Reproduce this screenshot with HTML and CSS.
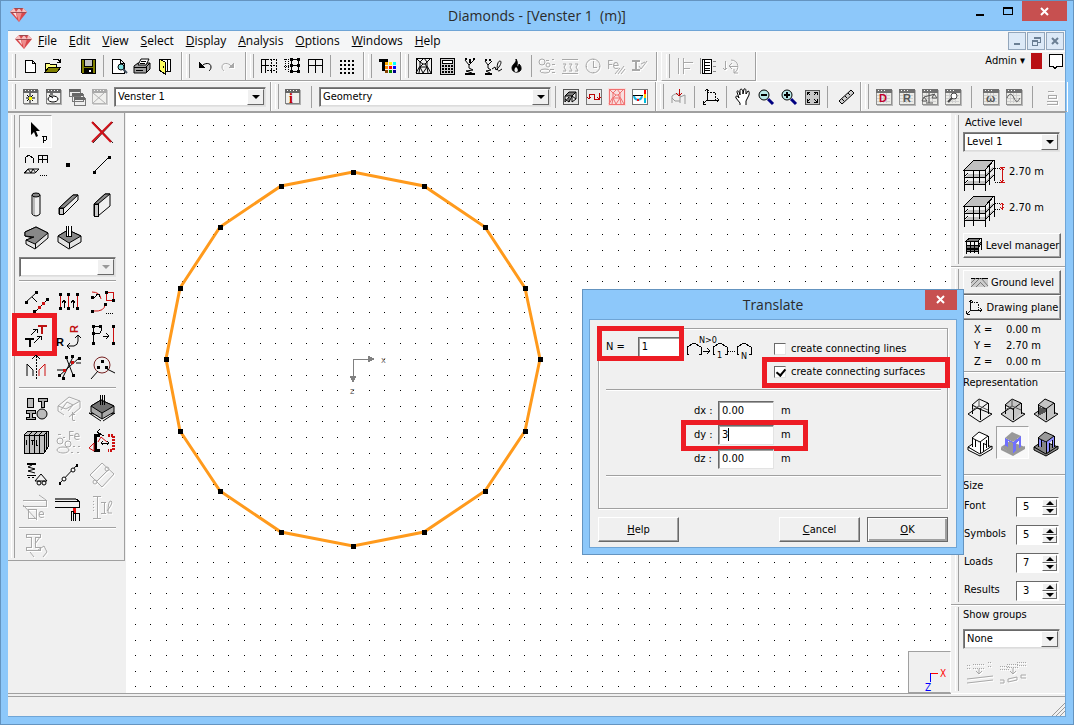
FILE: index.html
```html
<!DOCTYPE html>
<html lang="en">
<head>
<meta charset="utf-8">
<title>Diamonds - [Venster 1 (m)]</title>
<link rel="stylesheet" href="styles.css">
</head>
<body>
<svg class="defs" aria-hidden="true">
  <symbol id="gem" viewBox="0 0 17 15"><path d="M4 1h9l4 4-8 10-9-10z" fill="#d9484c"/><path d="M4 1l2 4h-6zM9 1l3 4h-6zM13 1l4 4h-5z" fill="#f6c0c0"/><path d="M6 5h6l-3 10z" fill="#ef8c8c"/><path d="M3 6l4 5-1-5z" fill="#fbe0e0"/><path d="M1 5.500h15M4.500 1.500h8" stroke="#9c4a50" fill="none"/></symbol>
  <symbol id="win" viewBox="0 0 18 18"><path d="M2 2h15v15h-15z" fill="#b0b0b0" stroke="none"/><path d="M1 1h14v14h-14z" fill="#f0f0ee" stroke="#808080"/><path d="M1 1h14v3h-14z" fill="#666" stroke="#666"/><path d="M3 2.500h1M6 2.500h1M9 2.500h1M12 2.500h1" stroke="#fff"/></symbol>
  <symbol id="gwin" viewBox="0 0 18 18"><path d="M2 2h16v16h-16z" fill="#b8b8b8" stroke="none"/><path d="M1 1h15v15h-15z" fill="#ecece8" stroke="#909090"/><path d="M1 1h15v3h-15z" fill="#707070" stroke="#707070"/><path d="M3 2.500h1M6 2.500h1M9 2.500h1" stroke="#fff"/><path d="M2 7h13M2 10h13M2 13h13M5 5v10M8 5v10M11 5v10" stroke="#cfcfcf"/></symbol>
  <symbol id="mesh" viewBox="0 0 18 18"><path d="M1 1h15v15h-15z"/><path class="smooth" d="M1 1l4 4v4l-4 7M16 1l-4 4v4l4 7M5 5l3 2h2l2-2M8 7l-3 3-1 6M10 7l2 3 1 6M5 10h7M5 10l3 6 4-6M5 5l4-4 3 4"/></symbol>
  <symbol id="storey" viewBox="0 0 32 34"><path d="M1 12l10-10h20l-9 10zM2 19l3-3h17l8-8v4l-8 8zM2 26l3-3h17l8-8v4l-8 7z" fill="#c0c0c0" stroke="none"/><path d="M1 12l10-10h20l-9 10zM1 12v21M10 12v20M22 12v21M31 2v21M26 7v20M1 19h21M1 26h21M16 12v13"/><path class="smooth" d="M22 19l9-9M22 26l9-9M1 19l4-4M1 26l4-4"/></symbol>
  <symbol id="plane" viewBox="0 0 18 18"><path d="M5 1v11h12M5 12l-4 4M3 3l2-2 2 2M15 10l2 2-2 2M1 13v3h3"/><path d="M5 4h8v8" stroke-dasharray="2 1"/></symbol>
</svg>

<div class="window">
  <header class="titlebar">
    <svg class="gem" width="17" height="15"><use href="#gem"/></svg>
    <h1>Diamonds - [Venster 1&nbsp; (m)]</h1>
    <div class="captions">
      <button class="cap" aria-label="Minimize"><svg width="10" height="10"><path d="M1 9h8" stroke-width="2"/></svg></button>
      <button class="cap" aria-label="Maximize"><svg width="12" height="10"><path d="M1 1h9v7h-9zM1 2h9"/></svg></button>
      <button class="cap close" aria-label="Close"><svg width="10" height="10"><path class="smooth" d="M1 2l7 7M8 2l-7 7" stroke="#fff" stroke-width="2"/></svg></button>
    </div>
  </header>

  <div class="client">
    <nav class="menu">
      <svg class="gem" width="17" height="15"><use href="#gem"/></svg>
      <a href="#file"><u>F</u>ile</a><a href="#edit"><u>E</u>dit</a><a href="#view"><u>V</u>iew</a><a href="#select"><u>S</u>elect</a><a href="#display"><u>D</u>isplay</a><a href="#analysis"><u>A</u>nalysis</a><a href="#options"><u>O</u>ptions</a><a href="#windows"><u>W</u>indows</a><a href="#help"><u>H</u>elp</a>
      <div class="mdi">
        <button aria-label="Minimize view"><svg width="10" height="10"><path d="M2 8h6" stroke="#6b7f94" stroke-width="2"/></svg></button>
        <button aria-label="Restore view"><svg width="10" height="10"><path d="M3 3v-2h6v5h-2M3 2h6M1 4h5v5h-5zM1 5h5" stroke="#6b7f94"/></svg></button>
        <button aria-label="Close view"><svg width="10" height="10"><path class="smooth" d="M2 2l6 6M8 2l-6 6" stroke="#6b7f94" stroke-width="2"/></svg></button>
      </div>
    </nav>

    <div class="toolbar">
      <div class="group first">
        <button aria-label="New"><svg width="20" height="20"><path d="M5 4h7l3 3v9h-10zM12 4v3h3" fill="#fff"/></svg></button>
        <button aria-label="Open"><svg width="20" height="20"><path d="M2 16v-9h4l1 1h6v3" fill="#ffff80"/><path d="M2 16l4-5h12l-4 5z" fill="#808000"/><path d="M10 4l2-1h3l2 3M14 6h3v-3"/></svg></button>
        <i class="space"></i>
        <button aria-label="Save"><svg width="20" height="20"><path d="M3 3h14v14h-13l-1-1z" fill="#808000"/><path d="M6 3h8v7h-8z" fill="#c0c0c0"/><path d="M6 12h8v5h-8z" fill="#000"/><path d="M12 14v2" stroke="#fff" stroke-width="2"/></svg></button>
        <i class="sep"></i>
        <button aria-label="Print preview"><svg width="20" height="20"><path d="M3 3h8l4 4v10h-12zM11 3v4h4" fill="#fff"/><circle class="smooth" cx="12" cy="11" r="3" fill="#80e0e0"/><path class="smooth" d="M14 13l4 4" stroke="#405060" stroke-width="2"/></svg></button>
        <button aria-label="Print"><svg width="20" height="20"><path class="smooth" d="M2 10l4-3h12v6l-4 4h-12z" fill="#a0a0a0"/><path class="smooth" d="M6 9l3-6h8l-3 6z" fill="#fff"/><path d="M9 5h5M8 7h5M2 11h12v5M4 14h7"/><path class="smooth" d="M14 11l4-4"/></svg></button>
        <button aria-label="Exit"><svg width="20" height="20"><path d="M4 3h11v12h-5" fill="#fff"/><path d="M4 3l6 3v12l-6-4z" fill="#ffff60"/><path d="M12 4v11M8 10v2"/></svg></button>
      </div>
      <div class="group">
        <button aria-label="Undo"><svg width="20" height="20"><path class="smooth" d="M7 10c2-3 9-4 9 1 0 2-1 3-2 4"/><path d="M4 6v6h6z" fill="#000" stroke="none"/></svg></button>
        <button aria-label="Redo" disabled><svg width="20" height="20"><path class="smooth" d="M13 10c-2-3-9-4-9 1 0 2 1 3 2 4"/><path d="M16 6v6h-6z" fill="#a8a8a8" stroke="none"/></svg></button>
      </div>
      <div class="group">
        <button aria-label="Grid lines"><svg width="20" height="20"><path d="M2 17v-14h6M2 9h6M6 3v14"/><path d="M8 3h9v11h-9M12 3v14M17 3v14M8 9h9" stroke-dasharray="2 1"/></svg></button>
        <button aria-label="Move grid"><svg width="20" height="20"><path d="M2 3h7M2 10h7M3 3v12M6 3v14" stroke-dasharray="1 1"/><path d="M9 3v14M16 3v14M9 3h7M9 9h7M9 15h7"/><path d="M8 3h3M15 3h3M8 9h3M15 9h3M8 15h3M15 15h3" stroke-width="3"/></svg></button>
        <button aria-label="Grid"><svg width="20" height="20"><path d="M3 17v-14h14v14M3 9h14M10 3v14"/></svg></button>
        <i class="sep"></i>
        <button aria-label="Dots"><svg width="20" height="20"><path d="M4 5h14M4 9h14M4 13h14M4 17h14" stroke-width="2" stroke-dasharray="2 2"/></svg></button>
      </div>
      <div class="group tight">
        <button aria-label="Text colours"><svg width="20" height="20"><path d="M2 4h9M6 3v12" stroke-width="3"/><path d="M8 7h3" stroke="#fa0" stroke-width="3"/><path d="M12 7h3" stroke="#ff0" stroke-width="3"/><path d="M16 7h3" stroke="#0ff" stroke-width="3"/><path d="M8 11h3" stroke="#f80" stroke-width="3"/><path d="M12 11h3" stroke="#f00" stroke-width="3"/><path d="M16 11h3" stroke="#00f" stroke-width="3"/><path d="M8 15h3" stroke="#840" stroke-width="3"/><path d="M12 15h3" stroke="#080" stroke-width="3"/><path d="M16 15h3" stroke="#008" stroke-width="3"/></svg></button>
      </div>
      <div class="group">
        <button aria-label="Mesh"><svg width="18" height="18"><use href="#mesh"/></svg></button>
        <button aria-label="Calculate"><svg width="20" height="20"><path d="M3 2h14v16h-14z" fill="#d0d0d0"/><path d="M5 4h10v3h-10z" fill="#fff"/><path d="M5 10h11M5 13h11M5 16h11" stroke-width="2" stroke-dasharray="2 1"/></svg></button>
        <button aria-label="Supports"><svg width="20" height="20"><path class="smooth" d="M5 4l4 5 5-5M9 9v3l4 2-7 1 6 2"/><path d="M5 3h2M9 4h2M13 3h2M9 6h2M5 18h10" stroke-width="2"/></svg></button>
        <button aria-label="Springs"><svg width="20" height="20"><path class="smooth" d="M2 5l3 4 4-4M5 9v3l3 2-5 1 4 2M9 13l3-2 1 3M13 14c5-4 6-9 4-9-3 0-4 10-1 10l3-2"/><path d="M2 4h2M6 4h2M2 18h7" stroke-width="2"/></svg></button>
        <button aria-label="Fire"><svg width="20" height="20"><path class="smooth" d="M10 3c1 4-4 5-4 9 0 6 10 5 9 0 0-2-1-3-2-4 0 2-1 2-2 3 0-3 1-5-1-8z" fill="#000"/><path class="smooth" d="M10 11c-3 3-1 5 0 5s3-1 1-4z" fill="#f0f0f0" stroke="none"/></svg></button>
        <i class="sep"></i>
        <button aria-label="Reinforcement" disabled><svg width="20" height="20"><circle class="smooth" cx="5" cy="6" r="3"/><circle class="smooth" cx="11" cy="9" r="2"/><ellipse class="smooth" cx="8" cy="15" rx="5" ry="2"/><path d="M9 4h3M15 3h2M13 13h4M15 8h3M15 16h3"/></svg></button>
        <button aria-label="Sections" disabled><svg width="20" height="20"><path d="M2 3h16M2 17h16"/><path class="smooth" d="M3 8h3l-2 3 2 4h-3M9 8h3l-2 3 2 4h-3M15 8h3l-2 3 2 4h-3"/></svg></button>
        <button aria-label="Time" disabled><svg width="20" height="20"><circle class="smooth" cx="10" cy="10" r="7"/><path d="M10 5v6h4M10 3v1M10 16v1M3 10h1M16 10h1"/></svg></button>
        <button aria-label="Steel reinforcement" disabled><svg width="20" height="20"><text x="1" y="13" class="t12">Fe</text><path class="smooth" d="M9 18l5-6M12 18l6-8M15 18l4-5"/></svg></button>
        <button aria-label="Profile" disabled><svg width="20" height="20"><path d="M3 5h8M7 5v9M3 14h8" stroke-width="2"/><path class="smooth" d="M10 10l2 3 6-8M12 8l4-2"/></svg></button>
      </div>
      <div class="group apart">
        <button aria-label="Align" disabled><svg width="20" height="20"><path d="M3 2v16M8 2v16M8 6h10M8 12h7"/></svg></button>
        <button aria-label="Beam table"><svg width="20" height="20"><path d="M2 2v16M15 5h3M15 10h3M15 15h3" stroke="#888"/><path d="M4 3h9v14h-9z" fill="#fff"/><path d="M6 3v14M6 6h6M6 9h6M6 12h6M6 14h6"/></svg></button>
        <button aria-label="Rotate down" disabled><svg width="20" height="20"><path d="M4 5v9M2 12l2 2 2-2M8 10h9M11 7l-3 3 3 3"/><path class="smooth" d="M10 4c8 0 9 10 3 13M13 13v4h4"/></svg></button>
      </div>
      <div class="account">
        <button class="user">Admin ▾</button><span class="flag"></span>
        <button aria-label="Messages"><svg width="15" height="18"><path d="M1 1h13v12h-5l-2 3-2-3h-4z" fill="#fff"/></svg></button>
      </div>
    </div>

    <div class="toolbar second">
      <div class="group">
        <button aria-label="New window"><svg width="18" height="18"><use href="#win"/><path class="smooth" d="M8 5v10M4 10h9M5 7l6 6M11 7l-6 6"/><path d="M7 10h3" stroke="#ff0" stroke-width="3"/></svg></button>
        <button aria-label="Duplicate"><svg width="18" height="18"><use href="#win"/><ellipse class="smooth" cx="8" cy="11" rx="5" ry="3" fill="#fff"/><path class="smooth" d="M4 7l4 3M5 6h3"/></svg></button>
        <button aria-label="Cascade"><svg width="18" height="18"><path d="M1 1h11v7h-11zM4 6h11v7h-11zM6 10h11v7h-11z" fill="#eee" stroke="#777"/><path d="M1 2h11M4 6h11M6 10h11" stroke="#666" stroke-width="3"/></svg></button>
        <button aria-label="Close window" disabled><svg width="18" height="18" class="dim"><use href="#win"/><path class="smooth" d="M2 5l12 10M13 5l-11 10" stroke="#777"/></svg></button>
        <span class="combo c1"><select aria-label="Window"><option>Venster 1</option></select><i></i></span>
      </div>
      <div class="group g2">
        <button aria-label="Info"><svg width="18" height="18"><use href="#win"/><text x="5" y="15" class="info">i</text></svg></button>
        <i class="sep wide"></i>
        <span class="combo c2"><select aria-label="Mode"><option>Geometry</option></select><i></i></span>
        <i class="sep"></i>
        <button aria-label="Geometry"><svg width="18" height="18"><path d="M1 1h15v15h-15z" fill="#e4e4e4" stroke="#555"/><path class="smooth" d="M3 8l4-4h7l-4 4zM3 8v6M7 9v5M10 8v6M14 4v7" fill="#777"/><path class="smooth" d="M3 11l4 3 3-6 4 3M3 14l4-5M10 14l4-3"/></svg></button>
        <button aria-label="Loads"><svg width="18" height="18"><path d="M1 1h15v15h-15z" fill="#ececec" stroke="#777"/><path d="M4 11v-5h5v5h5v-6M2 9l2 2 2-2M12 9l2 2 2-2" stroke="#b00"/></svg></button>
        <button aria-label="Mesh mode"><svg width="18" height="18" class="rosy"><use href="#mesh"/></svg></button>
        <button aria-label="Results"><svg width="18" height="18"><path d="M1 1h15v15h-15z" fill="#fff" stroke="#777"/><path d="M2 7h10"/><path class="smooth" d="M3 8c1 5 7 5 8 0" stroke="#18b0e0" stroke-width="2"/><path d="M6 12h2" stroke="red" stroke-width="2"/><path d="M14 2v4" stroke="red" stroke-width="2"/><path d="M14 6v4" stroke="#fc0" stroke-width="2"/><path d="M14 10v5" stroke="#0bd" stroke-width="2"/></svg></button>
      </div>
      <div class="group zoomers">
        <button aria-label="Cut"><svg width="18" height="18"><path class="smooth" d="M2 15v-7l3-2h5v9M10 9l5-2v9M2 10l3 3h5" stroke="#999"/><path d="M9 1v7M6 5l3 3 3-3" stroke="#c00000"/></svg></button>
        <i class="sep"></i>
        <button aria-label="Drawing plane"><svg width="18" height="18"><use href="#plane"/></svg></button>
        <i class="sep"></i>
        <button aria-label="Pan"><svg width="20" height="20"><path class="smooth" d="M7 18v-2l-4-5c-1-2 1-3 3 0l-2-6c0-2 2-2 3 3l0-5c1-2 3-1 3 4l1-5c2-1 2 1 2 5l2-3c2 0 1 3 1 4l-3 6v4" fill="#fff"/></svg></button>
        <button aria-label="Zoom out"><svg width="20" height="20"><path class="smooth" d="M12 12l5 5" stroke="#000080" stroke-width="3"/><circle class="smooth" cx="8" cy="8" r="5" fill="#b8e8e8"/><path d="M5 8h6" stroke-width="2"/></svg></button>
        <button aria-label="Zoom in"><svg width="20" height="20"><path class="smooth" d="M12 12l5 5" stroke="#000080" stroke-width="3"/><circle class="smooth" cx="8" cy="8" r="5" fill="#b8e8e8"/><path d="M5 8h6M8 5v6" stroke-width="2"/></svg></button>
        <button aria-label="Zoom all"><svg width="18" height="18"><path d="M2 2h14v14h-14z" fill="#c8c8c8" stroke="#555"/><path d="M4 7v-3h3M11 4h3v3M4 11v3h3M11 14h3v-3M4 4l3 3M14 4l-3 3M4 14l3-3M14 14l-3-3"/></svg></button>
        <i class="sep"></i>
        <button class="measure" aria-label="Measure"><svg width="20" height="20"><path class="smooth" d="M2 14l12-11 3 3-12 11z" fill="#ccc"/><path class="smooth" d="M5 12l2 2M8 9l2 2M11 6l2 2"/></svg></button>
      </div>
      <div class="group last">
        <button aria-label="Design"><svg width="18" height="18"><use href="#gwin"/><text x="4" y="14" class="letter crimson">D</text></svg></button>
        <button aria-label="Report"><svg width="18" height="18"><use href="#gwin"/><text x="5" y="14" class="letter">R</text></svg></button>
        <button aria-label="Balance"><svg width="18" height="18"><use href="#gwin"/><path class="smooth" d="M8 5v10M5 15h7M3 9l11-3M3 9l-2 4h5zM13 6l-2 4h5z" stroke="#555"/></svg></button>
        <button aria-label="Inspect"><svg width="18" height="18"><use href="#gwin"/><circle class="smooth" cx="10" cy="8" r="3" fill="#fff" stroke="#444"/><path class="smooth" d="M8 10l-4 4" stroke="#444" stroke-width="2"/></svg></button>
        <i class="sep wide"></i>
        <button aria-label="Frequency"><svg width="18" height="18"><use href="#gwin"/><text x="4" y="14" class="letter">ω</text></svg></button>
        <button aria-label="Signal"><svg width="18" height="18"><use href="#gwin"/><path class="smooth" d="M2 10c2-5 5-5 7 0s4 4 6 0" stroke="#555"/></svg></button>
        <i class="sep wide"></i>
        <button aria-label="Stack" disabled><svg width="18" height="18"><path d="M5 3h6M5 7h8v3h-8zM4 13h10v3h-10"/></svg></button>
      </div>
    </div>

    <main class="work">
      <aside class="palette">
        <div class="tools">
          <button class="on" aria-label="Select"><svg width="28" height="28"><path class="smooth" d="M9 4v13l3-3 2 5 2-1-2-5h4z" fill="#000" stroke="none"/><path d="M21 25v-7M20 18h4l1 2-1 2h-3"/></svg></button>
          <i></i>
          <button aria-label="Delete"><svg width="28" height="28"><path class="smooth" d="M5 4l20 21M25 4l-20 21" stroke="#222"/><path class="smooth" d="M4 4l19 20M24 4l-20 20" stroke="#d01018" stroke-width="2"/></svg></button>
          <button aria-label="Structures"><svg width="28" height="28"><path d="M3 12v-5l4-3 4 3v5M16 12v-8h9v8M16 8h9M20 4v8"/><path class="smooth" d="M2 22l4-4h11l-4 4zM6 18l3 4 2-4 3 4M3 22l3-4"/><path d="M18 24h8" stroke-dasharray="1 1"/></svg></button>
          <button aria-label="Point"><svg width="28" height="28"><path d="M11 14h4" stroke-width="4"/></svg></button>
          <button aria-label="Line"><svg width="28" height="28"><path d="M6 21l15-15"/><path d="M5 21h3M20 6h3" stroke-width="3"/></svg></button>
        </div>
        <div class="tools">
          <button aria-label="Column"><svg width="28" height="28"><path class="smooth" d="M10 4v19q4 4 8 0v-19" fill="#f0f0f0"/><path d="M11 6h2v18h-2z" fill="#bbb" stroke="none"/><ellipse class="smooth" cx="14" cy="4" rx="4" ry="2" fill="#888"/></svg></button>
          <button aria-label="Beam"><svg width="28" height="28"><path class="smooth" d="M4 17l14-13h5v5l-14 14h-5z" fill="#f0f0f0"/><path class="smooth" d="M4 17l14-13h5l-14 13z" fill="#888"/><path d="M4 17h4v6h-4z" fill="#ccc"/></svg></button>
          <button aria-label="Wall"><svg width="28" height="28"><path class="smooth" d="M6 13l11-10h5v12l-12 10h-4z" fill="#f0f0f0"/><path class="smooth" d="M6 13l11-10h5l-12 10z" fill="#888"/><path d="M6 13h4v12h-4z" fill="#ccc"/></svg></button>
          <button aria-label="Slab"><svg width="28" height="28"><path class="smooth" d="M3 8l11-5 12 6v5l-13 11-9-5v-4l7-2-8-2z" fill="#e4e4e4"/><path class="smooth" d="M3 8l11-5 12 6-13 11-9-4 8-3-9-1z" fill="#888"/><path d="M13 20v4"/></svg></button>
          <button aria-label="Foundation"><svg width="28" height="28"><path class="smooth" d="M3 12l10-6 13 6v6l-12 7-11-7z" fill="#e4e4e4"/><path class="smooth" d="M3 12l10-6 13 6-12 7z" fill="#888"/><path d="M11 2v10h5v-10" fill="#fff"/><path d="M14 19v5M13 2v10"/></svg></button>
        </div>
        <span class="combo c3"><select aria-label="Section" disabled><option></option></select><i></i></span>
        <hr>
        <div class="tools">
          <button aria-label="Divide line"><svg width="28" height="28"><path class="smooth" d="M4 14l10-9M10 9l5 5M14 23l12-12"/><path d="M3 14h3M13 4h3M11 23h3M24 11h3" stroke-width="3"/><path d="M16 19h3M20 15h3" stroke="#c11" stroke-width="3"/></svg></button>
          <button aria-label="Extend lines"><svg width="28" height="28"><path d="M5 6v14M13 6v14M22 6v14" stroke="#c11"/><path d="M9 20v-7M7 15l2-3 2 3M18 20v-7M16 15l2-3 2 3"/><path d="M4 6h3M12 6h3M21 6h3M4 20h3M12 20h3M21 20h3" stroke-width="3"/></svg></button>
          <button aria-label="Arcs"><svg width="28" height="28"><path class="smooth" d="M4 4q8 0 9 7M5 23q12 1 12-7" stroke="#c11"/><path d="M18 4h7v8h-7z" stroke="#c11"/><path d="M17 4h3M24 12h3M3 9h3M3 23h3M16 16h3" stroke-width="3"/><path d="M5 11l5-5M8 6h3v3"/><path d="M18 25h8" stroke-dasharray="1 1"/></svg></button>
          <button aria-label="Translate"><svg width="28" height="28"><path d="M3 18h9M8 18v8" stroke-width="2"/><path d="M16 5h9M20 5v8" stroke="#b11" stroke-width="2"/><path d="M9 14l6-6M11 8h4v4M12 22l6-6M15 15h4v4"/></svg><span class="mark tool"></span></button>
          <button aria-label="Rotate"><svg width="28" height="28"><text x="1" y="25" class="letter black">R</text><text x="0" y="0" class="letter red" transform="translate(23 12) rotate(-90)">R</text><path class="smooth" d="M23 14v6q0 4-4 5h-7M20 17l3-3 3 3M15 22l-3 3 3 3"/></svg></button>
          <button aria-label="Project"><svg width="28" height="28"><path d="M5 22v-17h7l2 3-2 4h-7M15 15h6M18 12l3 3-3 3"/><path d="M25 5v17" stroke="#c11"/><path d="M4 5h3M11 5h3M4 12h3M4 22h3M24 5h3M24 22h3" stroke-width="3"/></svg></button>
          <button aria-label="Mirror"><svg width="28" height="28"><path class="smooth" d="M5 22v-12l6 6v6"/><path class="smooth" d="M23 22v-12l-6 6v6" stroke="#c11"/><path d="M14 2v24" stroke-dasharray="2 1"/><path d="M10 5l4-4 4 4"/></svg></button>
          <button aria-label="Intersect"><svg width="28" height="28"><path class="smooth" d="M4 22l20-18M8 23l10-20M11 3l7 18M2 16h6M21 9h5"/><path d="M3 21h3M7 24h3M16 2h3M23 4h3M10 3h3M17 21h3" stroke-width="3"/><path d="M8 16h3M16 8h3" stroke="#c11" stroke-width="3"/></svg></button>
          <button aria-label="Clean up"><svg width="28" height="28"><circle class="smooth" cx="14" cy="11" r="8" stroke="#722"/><path class="smooth" d="M3 25l7-8M19 15l8 4"/><path d="M13 7h3M9 13h3M17 13h3" stroke-width="3"/></svg></button>
        </div>
        <hr>
        <div class="tools">
          <button aria-label="Sections"><svg width="28" height="28"><path d="M5 3h6v9h-6z" fill="#bbb"/><path d="M16 3h9v3h-3v6h-3v-6h-3zM4 15h9v3h-3v4h3v2h-9v-2h3v-4h-3z" fill="#aaa"/><circle class="smooth" cx="20" cy="19" r="5" fill="#bbb"/></svg></button>
          <button aria-label="Thickness" disabled><svg width="28" height="28"><path class="smooth" d="M3 11l11-9 11 4v7l-11 9M3 11v5l6 4M3 11l8 3 14-8M6 15l6-8 6 3-5 6"/><text x="16" y="26" class="t12">t</text></svg></button>
          <button aria-label="Foundation size"><svg width="28" height="28"><path class="smooth" d="M3 11l10-6 13 6v6l-12 7-11-7z" fill="#aaa"/><path class="smooth" d="M3 11l10-6 13 6-12 7z" fill="#707070"/><path d="M12 0v10M14 0v10M16 0v10"/><path class="smooth" d="M1 18l12 8M15 26l12-8M1 18l5 1M27 18l-4 1M14 18v6"/></svg></button>
          <button aria-label="Library"><svg width="28" height="28"><path d="M2 7l4-4h20v16l-4 6h-20z" fill="#c0c0c0"/><path d="M2 7h20v18M7 7v18M12 7v18M17 7v18M7 7l4-4M12 7l4-4M17 7l4-4M22 7l4-4M4 12v5M10 12v5M9 12h3M14 12v5h2M24 5v17"/></svg></button>
          <button aria-label="Concrete" disabled><svg width="28" height="28"><text x="13" y="12" class="t12">Fe</text><circle class="smooth" cx="5" cy="13" r="3"/><circle class="smooth" cx="13" cy="16" r="3"/><ellipse class="smooth" cx="8" cy="22" rx="6" ry="3"/><path d="M3 6h3M8 9h2M18 18h2M23 18h2M16 24h2M22 24h2"/></svg></button>
          <button aria-label="Hinges"><svg width="28" height="28"><path d="M12 7h-5v15h5" stroke-width="3"/><path d="M20 7h5v15h-5" stroke="#c11" stroke-width="3" stroke-dasharray="2 1"/><path class="smooth" d="M10 14l3-5 6 5M6 15l-5 5 5 3z" stroke="#c11"/><path d="M9 4l7 4M12 1l-3 3 3 3M13 15h8M15 13l-2 2 2 2M19 13l2 2-2 2"/></svg></button>
          <button aria-label="Supports"><svg width="28" height="28"><path d="M5 3h9" stroke-width="2"/><path class="smooth" d="M10 4l-4 2 7 2-7 2 7 2M19 13l-6 7h12z"/><path d="M5 14h9M6 16h2M10 16h2"/><circle class="smooth" cx="17" cy="22" r="2"/><circle class="smooth" cx="22" cy="22" r="2"/></svg></button>
          <button aria-label="Joint"><svg width="28" height="28"><path class="smooth" d="M5 22l17-18"/><circle class="smooth" cx="9" cy="18" r="2" fill="#fff"/><circle class="smooth" cx="18" cy="9" r="2" fill="#fff"/><path d="M4 22h2M21 4h2" stroke-width="3"/></svg></button>
          <button aria-label="Line hinge" disabled><svg width="28" height="28"><path class="smooth" d="M2 14l12-12 12 11-12 13zM9 20l11-11"/><circle class="smooth" cx="7" cy="21" r="2"/><circle class="smooth" cx="19" cy="8" r="2"/></svg></button>
          <button aria-label="Eccentricity" disabled><svg width="28" height="28"><path d="M1 6h23v6h-23M6 15h8v9h-8z"/><path class="smooth" d="M17 1l7 5M1 11l14 15"/><text x="16" y="24" class="t12">e</text></svg></button>
          <button aria-label="Beam end"><svg width="28" height="28"><path d="M0 4h20l4 3v6h-24M0 7h24"/><path d="M0 5h21" stroke="#666" stroke-width="2"/><path d="M19 14v5" stroke="#e11" stroke-width="3"/><path d="M16 27v-10h2v10M19 19h5v8M20 19v8"/></svg></button>
          <button aria-label="Buckling" disabled><svg width="28" height="28"><path d="M9 2v22M5 2h8M5 24h8M13 8h5M13 19h5M16 8v11"/><path class="smooth" d="M19 17q7-9 4-10t-3 12h4"/><path d="M5 7v11" stroke-dasharray="1 2"/></svg></button>
        </div>
        <hr>
        <div class="tools short">
          <button aria-label="Steel" disabled><svg width="28" height="28"><path d="M4 3h14v3h-5v10h5v3h-14v-3h5v-10h-5z"/><path class="smooth" d="M13 13l5-7M8 21l4 5M16 19l6-4 3 6-4 5"/></svg></button>
        </div>
      </aside>

      <section class="canvas">
        <svg class="drawing"><path id="dots"/><path id="ring" class="ring"/><path id="nodes" class="nodes"/><g class="axes"><path d="M227 246h20M227 246v20"/><path d="M242 243l6 3-6 3zM224 263l3 6 3-6z" fill="#808080"/><text x="255" y="250">x</text><text x="224" y="281">z</text></g></svg>
        <div class="compass"><svg width="42" height="42"><path d="M21 21h8" stroke="red"/><path d="M21 21v9" stroke="blue"/><text x="31" y="25">X</text><text x="16" y="39">Z</text></svg></div>
      </section>

      <aside class="side">
        <section class="level">
          <label for="lvl">Active level</label>
          <span class="combo"><select id="lvl"><option>Level 1</option></select><i></i></span>
          <p><svg width="44" height="34"><use href="#storey" width="32" height="34"/><path d="M32 10h5M32 24h5" stroke-dasharray="1 1"/><path d="M39 10v14M37 12l2-2 2 2M37 22l2 2 2-2M37 9h5M37 24h5" stroke="#c11"/></svg>2.70 m</p>
          <p><svg width="44" height="34"><use href="#storey" width="32" height="34"/><path d="M32 9h5M32 15h5" stroke-dasharray="1 1"/><path d="M39 9v7M37 11l2-2 2 2M37 13l2 2 2-2" stroke="#c11"/></svg>2.70 m</p>
          <button class="push"><svg width="17" height="17"><path d="M1 4l4-3h11l-3 3zM1 8h12l3-3v2l-3 4h-12zM1 12h12v2h-12z" fill="#777"/><path d="M1 4v13M5 4v12M9 4v12M13 4v13M16 1v12"/></svg>Level manager</button>
        </section>
        <section class="plane">
          <button class="push"><svg width="17" height="11"><path d="M1 1h17v9h-17z" fill="#ccc" stroke="none"/><path d="M1 1h17"/><path class="smooth" d="M1 6l5-5M1 10l9-9M6 10l5-5M10 5l5 5M11 1l7 8" stroke="#777"/></svg>Ground level</button>
          <button class="push"><svg width="17" height="17"><use href="#plane"/></svg>Drawing plane</button>
          <dl><dt>X =</dt><dd>0.00 m</dd><dt>Y =</dt><dd>2.70 m</dd><dt>Z =</dt><dd>0.00 m</dd></dl>
        </section>
        <section class="repr">
          <h2>Representation</h2>
          <div class="views" id="views"></div>
        </section>
        <section class="size">
          <h2>Size</h2>
          <div class="row"><label for="s1">Font</label><span class="spin"><input id="s1" value="5"><span><button aria-label="Increase font"></button><button aria-label="Decrease font"></button></span></span></div>
          <div class="row"><label for="s2">Symbols</label><span class="spin"><input id="s2" value="5"><span><button aria-label="Increase symbols"></button><button aria-label="Decrease symbols"></button></span></span></div>
          <div class="row"><label for="s3">Loads</label><span class="spin"><input id="s3" value="7"><span><button aria-label="Increase loads"></button><button aria-label="Decrease loads"></button></span></span></div>
          <div class="row"><label for="s4">Results</label><span class="spin"><input id="s4" value="3"><span><button aria-label="Increase results"></button><button aria-label="Decrease results"></button></span></span></div>
        </section>
        <section class="groups">
          <label for="grp">Show groups</label>
          <span class="combo"><select id="grp"><option>None</option></select><i></i></span>
          <div class="pair">
            <button aria-label="Group" disabled><svg width="28" height="26"><path d="M1 5h3M1 8h3M7 4h12M7 8h12M22 2h4M22 6h4" stroke-dasharray="1 1"/><path class="smooth" d="M13 9v5M10 11l3 3 3-3M1 19l26-3M1 23l26-3"/></svg></button>
            <button aria-label="Ungroup" disabled><svg width="28" height="26"><path d="M1 6h9M8 4h11M18 2h9M1 9h9M8 7h11M18 5h9" stroke-dasharray="1 1"/><path class="smooth" d="M14 8v6M11 11l3 3 3-3M1 20h4v3h-4M9 22v-3l9-2v3zM27 15h-5v3h5"/></svg></button>
          </div>
        </section>
      </aside>
    </main>
    <footer class="status"><svg width="14" height="14"><path class="smooth" d="M1 14l13-13M5 14l9-9M9 14l5-5" stroke="#999"/></svg></footer>
  </div>
</div>

<div class="dialog" role="dialog" aria-labelledby="dt">
  <header><h2 id="dt">Translate</h2><button class="cap close" aria-label="Close dialog"><svg width="10" height="10"><path class="smooth" d="M1 1l7 7M8 1l-7 7" stroke="#fff" stroke-width="2"/></svg></button></header>
  <form>
    <div class="panel">
      <div class="top">
        <div class="count"><label for="n">N =</label><input id="n" value="1"><span class="mark"></span></div>
        <svg width="66" height="26"><path d="M2 17h-2v-7l7-4 7 4v7h-2M16 14h7M20 11l3 3-3 3M28 17h-2v-7l7-4 7 4v7h-2M52 17h-2v-7l7-4 7 4v7h-2"/><path d="M41 14h8" stroke-dasharray="1 1"/><text x="12" y="6">N&gt;0</text><text x="30" y="21">1</text><text x="54" y="22">N</text></svg>
        <div class="checks">
          <label><input type="checkbox">create connecting lines</label>
          <label><input type="checkbox" checked>create connecting surfaces<span class="mark"></span></label>
        </div>
      </div>
      <hr>
      <div class="deltas">
        <div><label for="dx">dx :</label><input id="dx" value="0.00"><span>m</span></div>
        <div><label for="dy">dy :</label><input id="dy" value="3"><span>m</span><b class="caret"></b><b class="mark"></b></div>
        <div><label for="dz">dz :</label><input id="dz" value="0.00"><span>m</span></div>
      </div>
      <hr>
    </div>
    <div class="actions"><button type="button" class="push"><span><u>H</u>elp</span></button><i></i><button type="button" class="push"><span><u>C</u>ancel</span></button><button type="button" class="push default"><span><u>O</u>K</span></button></div>
  </form>
</div>
<script src="drawing.js"></script>
</body>
</html>
```
FILE: styles.css
```css
* { box-sizing: border-box; }
html, body { height: 100%; }
body { margin: 0; position: relative; overflow: hidden; font: 11px/14px "DejaVu Sans Condensed", "Noto Sans", sans-serif; color: #000; }
button, input, select { font: inherit; color: inherit; margin: 0; }
button { border: 0; background: none; padding: 0; display: flex; align-items: center; justify-content: center; }
svg { display: block; fill: none; stroke: #000; shape-rendering: crispEdges; flex: none; overflow: visible; }
svg text { stroke: none; fill: #000; font-size: 9px; }
svg .t12 { font-size: 12px; }
svg .letter { font: bold 11px "Liberation Sans", sans-serif; fill: #555; }
svg .crimson { fill: #c0002b; }
svg .black { fill: #000; }
svg .red { fill: #c11111; }
svg .info { font: bold 14px "Liberation Serif", serif; fill: #c00000; }
.smooth { shape-rendering: auto; }
.defs { position: absolute; width: 0; height: 0; }
.gem { stroke: none; shape-rendering: auto; }
h1, h2, p, dl, dd { margin: 0; font-weight: normal; font-size: 11px; }
i { display: block; }

.window { height: 100%; display: flex; flex-direction: column; background: #8dc8fa; border: 1px solid #6494c0; padding: 0 7px 7px; }
.titlebar { height: 29px; flex: none; display: grid; grid-template-columns: 130px 1fr 130px; align-items: start; }
.titlebar .gem { margin: 6px 0 0 2px; }
.titlebar h1 { font: 14px/29px "Open Sans", sans-serif; color: #2b2b2b; text-align: center; }
.captions { display: flex; justify-content: flex-end; margin-right: -1px; }
.cap { width: 28px; height: 20px; }
.cap.close { width: 45px; background: #c75050; }
.client { flex: 1; min-height: 0; display: flex; flex-direction: column; background: #f0f0f0; border: 1px solid #6fa5d6; border-left: 0; }

.menu { height: 20px; flex: none; display: flex; align-items: center; background: #f5f6f7; gap: 12px; padding-left: 7px; font: 12px/18px "Open Sans", sans-serif; }
.menu a { color: #000; text-decoration: none; }
.menu .gem { margin-right: -6px; }
.mdi { margin-left: auto; display: flex; gap: 1px; padding-right: 1px; }
.mdi button { width: 18px; height: 18px; border: 1px solid #93a6bb; background: #dce9f7; }

.toolbar { display: flex; height: 30px; flex: none; border-top: 1px solid #fff; }
.group { display: flex; align-items: center; padding: 0 6px 0 11px; border-right: 1px solid #a0a0a0; border-bottom: 1px solid #a0a0a0; box-shadow: 1px 0 #fff; position: relative; }
.group::before, .palette::before, .side section::before { content: ""; position: absolute; left: 4px; top: 2px; bottom: 2px; width: 2px; border-left: 1px solid #fff; border-right: 1px solid #a0a0a0; }
.group button { width: 23px; height: 26px; }
.first { padding: 0 5px 0 10px; }
.tight { padding-right: 2px; }
.apart { margin-left: 4px; padding-right: 13px; border-left: 1px solid #fff; }
.space { width: 12px; }
.sep { width: 1px; height: 22px; background: #a0a0a0; margin: 0 3px 0 4px; }
.sep.wide { margin: 0 7px; }
.zoomers .sep { margin: 0 4px; }
button:disabled svg { stroke: #a8a8a8; filter: drop-shadow(1px 1px #fff); }
button:disabled svg text { fill: #a8a8a8; }
.dim { opacity: .5; }
.rosy { stroke: #f07070; background: #f8dede; }
.account { margin-left: auto; display: flex; align-items: flex-start; gap: 6px; padding: 1px 2px 0 0; }
.user { height: 16px; }
.flag { width: 11px; height: 16px; background: #b91014; }
.second { height: 31px; }
.second .group { padding-right: 4px; }
.second .g2 { padding-left: 10px; }
.second .zoomers { padding-right: 2px; }
.measure { margin: 0 0 0 3px; }
.second .last { flex: 1; border-right: 0; }

.combo { display: grid; height: 20px; background: #fff; border: 1px solid; border-color: #828282 #e3e3e3 #e3e3e3 #828282; box-shadow: inset 1px 1px #696969, inset -1px -1px #dcdcdc; }
.combo select { grid-area: 1 / 1; appearance: none; border: 0; background: none; padding: 0 18px 0 3px; width: 100%; min-width: 0; outline: 0; opacity: 1; }
.combo i { grid-area: 1 / 1; justify-self: end; width: 17px; margin: 1px; background: #f0f0f0; border: 1px solid; border-color: #fff #696969 #696969 #fff; pointer-events: none; display: flex; align-items: center; justify-content: center; }
.combo i::after { content: ""; border: 4px solid transparent; border-top-color: #000; border-bottom: 0; }
.c1 { width: 152px; margin-left: 3px; }
.c2 { width: 232px; }
.c3 { width: 97px; margin: 3px 0 0; }
.c3 i::after { border-top-color: #999; }

.work { flex: 1; min-height: 0; display: flex; border-top: 1px solid #a0a0a0; border-bottom: 1px solid #a0a0a0; }
.palette { width: 117px; flex: none; align-self: flex-start; position: relative; padding: 2px 8px 3px 11px; border-right: 1px solid #a0a0a0; border-bottom: 1px solid #a0a0a0; }
.palette::before { left: 3px; }
.tools { display: grid; grid-template-columns: repeat(3, 33px); grid-auto-rows: 33px; }
.tools + .tools { margin-top: 7px; }
.tools.short { grid-auto-rows: 25px; }
.tools button { position: relative; }
.tools .on, .views .on { background: #f8f8f8; border: 1px solid; border-color: #a0a0a0 #fff #fff #a0a0a0; }
.palette hr, .panel hr { width: 97px; height: 2px; border: 0; border-top: 1px solid #a0a0a0; background: #fff; margin: 3px 0; }
.mark { position: absolute; border: 5px solid #ed1c24; pointer-events: none; }
.mark.tool { inset: -5px -5px -5px -7px; }

.canvas { flex: 1; min-width: 0; background: #fff; position: relative; overflow: hidden; margin-left: 1px; }
.drawing { width: 100%; height: 100%; }
.ring { stroke: #ff9a1c; stroke-width: 3; shape-rendering: auto; }
.nodes { stroke-width: 5; }
.axes { stroke: #808080; }
.axes text { fill: #707070; }
.compass { position: absolute; right: 0; bottom: 0; width: 43px; height: 42px; background: #f0f0f0; border: 1px solid #a0a0a0; border-right-color: #fff; }
.compass text { font-size: 10px; }
.compass text:first-of-type { fill: red; }
.compass text:last-of-type { fill: blue; }

.side { width: 114px; flex: none; display: flex; flex-direction: column; }
.side section { position: relative; border-bottom: 1px solid #a0a0a0; padding: 0 4px 0 12px; box-shadow: 0 1px #fff; }
.side .combo { width: 97px; }
.level { height: 154px; }
.level label { display: block; padding: 3px 0 2px 2px; }
.level p { display: flex; align-items: center; gap: 2px; height: 33px; margin-top: 3px; }
.level p svg { margin-top: 6px; }
.push { background: #f0f0f0; border: 1px solid; border-color: #fff #696969 #696969 #fff; box-shadow: inset -1px -1px #a0a0a0; height: 25px; gap: 4px; white-space: nowrap; }
.side .push { width: 98px; }
.level .push { margin-top: 9px; }
.plane { height: 105px; }
.side .plane { padding-top: 3px; }
.plane dl { display: grid; grid-template-columns: 32px 1fr; row-gap: 2px; padding: 3px 0 0 11px; }
.repr { height: 103px; }
.repr h2 { padding: 4px 0 3px; }
.side .repr, .side .size { padding-right: 0; }
.views { display: grid; grid-template-columns: repeat(3, 33px); grid-auto-rows: 33px; }
.size { height: 130px; }
.size h2 { padding: 4px 0 0; height: 18px; }
.row { display: flex; justify-content: space-between; align-items: center; height: 28px; padding: 0 6px 0 1px; }
.row label { margin-top: -3px; }
.spin { display: flex; width: 43px; height: 20px; border: 1px solid; border-color: #696969 #fff #fff #696969; background: #fff; padding: 1px; }
.spin input { width: 24px; border: 0; padding: 0 0 0 5px; background: none; outline: 0; min-width: 0; }
.spin > span { flex: 1; display: grid; grid-template-rows: 1fr 1fr; }
.spin button { background: #f0f0f0; border: 1px solid; border-color: #fff #696969 #696969 #fff; min-height: 0; }
.spin button::after { content: ""; border: 4px solid transparent; border-bottom-color: #000; border-top: 0; }
.spin button:last-child::after { border-bottom: 0; border-top: 4px solid #000; }
.side .groups { flex: 1; border-bottom: 0; }
.groups label { display: block; padding: 3px 0 7px; }
.pair { display: flex; gap: 5px; padding: 11px 0 0 3px; }
.status { height: 20px; flex: none; margin-top: 2px; border-top: 1px solid #a0a0a0; display: flex; align-items: flex-end; justify-content: flex-end; }

.dialog { position: absolute; left: 582px; top: 289px; width: 382px; background: #8dc8fa; border: 1px solid #6494c0; padding: 0 6px 6px; }
.dialog header { height: 29px; display: grid; grid-template-columns: 32px 1fr 32px; align-items: start; }
.dialog header h2 { grid-column: 2; text-align: center; font: 14px/29px "Open Sans", sans-serif; color: #2b2b2b; }
.dialog .cap.close { width: 32px; height: 20px; }
.dialog form { background: #f0f0f0; border: 1px solid #6fa5d6; padding: 8px 8px 5px; }
.panel { border: 1px solid #a0a0a0; box-shadow: 1px 1px #fff, inset 1px 1px #fff; height: 181px; padding: 8px 6px 0 7px; }
.panel hr { width: 100%; margin: 0; }
.top { display: flex; height: 52px; align-items: flex-start; }
.count { position: relative; display: flex; align-items: center; width: 81px; gap: 13px; }
.count .mark { inset: -11px 3px -4px -9px; }
.count input { width: 42px; }
.dialog form input:not([type]) { height: 20px; border: 1px solid; border-color: #696969 #e3e3e3 #e3e3e3 #696969; box-shadow: inset 1px 1px #a0a0a0; background: #fff; padding: 0 3px 2px; outline: 0; }
.checks { margin-left: auto; width: 167px; }
.checks label { display: flex; align-items: center; gap: 5px; height: 23px; position: relative; white-space: nowrap; }
.checks .mark { inset: -3px -9px -5px -12px; }
.checks input { appearance: none; width: 12px; height: 12px; background: #fff; border: 1px solid; border-color: #696969 #e3e3e3 #e3e3e3 #696969; position: relative; }
.checks input:checked::after { content: ""; position: absolute; left: 3px; top: 0; width: 4px; height: 7px; border: solid #000; border-width: 0 2px 2px 0; transform: rotate(40deg); }
.deltas { height: 84px; padding: 8px 0 0 88px; }
.deltas > div { position: relative; display: flex; align-items: center; height: 24px; width: 110px; }
.deltas label { width: 24px; }
.deltas input { width: 56px; margin-right: 7px; }
.deltas .mark { inset: -3px -4px -4px -13px; }
.caret { position: absolute; left: 34px; top: 5px; width: 1px; height: 13px; background: #000; }
.actions { display: grid; grid-template-columns: 81px 1fr 81px 81px; column-gap: 7px; padding-top: 8px; }
.actions .default { outline: 1px solid #696969; outline-offset: -1px; border-color: #696969; box-shadow: inset 1px 1px #fff, inset -2px -2px #a0a0a0; }
```
FILE: drawing.js
```js
// Model drawing: snap grid, 16-sided ring and its nodes.
const centre = { x: 227, y: 246 };
const cell = 187 / 12;
let dots = "";
for (let i = -14; i < 60; i++) {
  for (let j = -15; j < 40; j++) {
    dots += `M${centre.x + Math.round(i * cell)} ${centre.y + Math.round(j * cell) + 0.5}h1`;
  }
}
document.getElementById("dots").setAttribute("d", dots);

const points = Array.from({ length: 16 }, (_, k) => {
  const a = k * Math.PI / 8;
  return [
    Math.floor(centre.x + 187 * Math.cos(a) + 0.001),
    Math.ceil(centre.y + 187 * Math.sin(a) - 0.3)
  ];
});
document.getElementById("ring").setAttribute("d", "M" + points.map(p => p.join(" ")).join("L") + "Z");
document.getElementById("nodes").setAttribute("d", points.map(p => `M${p[0] - 2} ${p[1] + 0.5}h5`).join(""));

// Representation buttons: the same small building with different fills.
const styles = [
  ["Wireframe", "none", "none", "none", "#000", 1],
  ["Transparent", "#d0d0d0", "#c4c4c4", "none", "#000", 1],
  ["Hidden lines", "#c4c4c4", "#c4c4c4", "none", "#000", 1],
  ["Solid wireframe", "#fff", "#fff", "#fff", "#000", 2],
  ["Rendered", "#999", "#999", "#7070ff", "none", 3],
  ["Rendered with edges", "#888", "#999", "#9090ff", "#000", 2]
];
document.getElementById("views").innerHTML = styles.map(([name, fill, roof, face, line, w], i) =>
  `<button aria-label="${name}"${i === 4 ? ' class="on"' : ""}><svg width="26" height="26">
  <path class="smooth" d="M1 17l9-6 15 6-12 8z" fill="${fill}" stroke="${line}"/>
  ${w > 1 ? `<path class="smooth" d="M1 17v3l12 6 12-7v-3l-12 8z" fill="${fill}" stroke="${line}"/>` : ""}
  ${w === 1 ? `<path d="M5 8l8 4v11l8-7v-10l-9-4z" fill="${roof}" stroke="none"/>` : ""}
  ${i === 2 ? '<path d="M5 9l8 4v2l-8 4z" fill="#555" stroke="none"/>' : ""}
  ${w > 1 ? `<path d="M5 8l8 4 8-6v11l-2 1v-7l-3 2v8l-3 2v-10l-5-2v6l-3-1z" fill="${face}" stroke="none"/>` : ""}
  <path class="smooth" d="M5 8l7-6 9 4-8 6z" fill="${roof}" stroke="${line}"/>
  <path d="M5 8v9M13 12v11M21 6v11" stroke="${line}"/>
  ${i < 2 ? '<path class="smooth" d="M12 2v7M5 13l7-4 9 4" stroke="#555"/>' : ""}
  ${w === 2 ? '<path d="M8 10v7M16 13v9M19 10v8"/>' : ""}
  </svg></button>`).join("");
```
